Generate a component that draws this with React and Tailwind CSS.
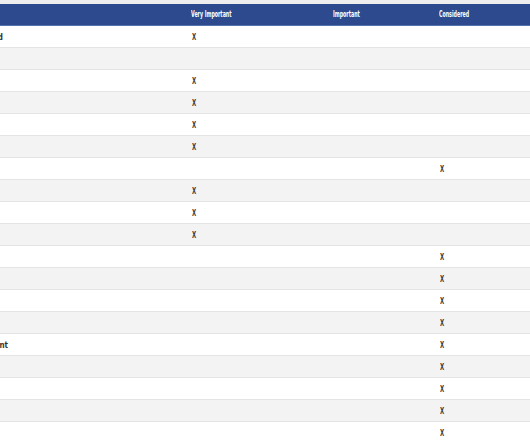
import React from 'react';

// Priority matrix table (cropped view)
const rows = [
  { label: 'Demonstrated', pr: 'pr-[183px]', mark: 1 },
  { label: '', mark: 0 },
  { label: '', mark: 1 },
  { label: '', mark: 1 },
  { label: '', mark: 1 },
  { label: '', mark: 1 },
  { label: '', mark: 3 },
  { label: '', mark: 1 },
  { label: '', mark: 1 },
  { label: '', mark: 1 },
  { label: '', mark: 3 },
  { label: '', mark: 3 },
  { label: '', mark: 3 },
  { label: '', mark: 3 },
  { label: 'Commitment to Client Engagement', pr: 'pr-[178px]', mark: 3 },
  { label: '', mark: 3 },
  { label: '', mark: 3 },
  { label: '', mark: 3 },
  { label: '', mark: 3 },
];

const font = { fontFamily: '"DejaVu Sans Condensed", "DejaVu Sans", sans-serif' };

const Cell = ({ show }) => (
  <div className="flex items-center pl-[6px] pt-[2px]">
    {show && (
      <span
        className="inline-block origin-left scale-x-[0.75] text-[8px] font-bold text-[#3a3a3a]"
        style={font}
      >
        X
      </span>
    )}
  </div>
);

const App = () => {
  return (
    <div className="w-[530px] h-[442px] overflow-hidden bg-white">
      <div className="h-[4px] bg-[#eeeeee]" />
      <div className="grid grid-cols-[186px_142px_106px_96px] h-[22px] bg-[#2c4a8d] border-b border-[#5573ad]">
        <div />
        {['Very Important', 'Important', 'Considered'].map((h) => (
          <div key={h} className="flex items-center pl-[5px]">
            <span
              className="inline-block origin-left scale-x-[0.62] whitespace-nowrap text-[8.5px] font-bold text-white"
              style={font}
            >
              {h}
            </span>
          </div>
        ))}
      </div>
      {rows.map((r, i) => (
        <div
          key={i}
          className={`grid grid-cols-[186px_142px_106px_96px] h-[22px] border-b border-[#e4e4e4] ${
            i % 2 === 0 ? 'bg-white' : 'bg-[#f3f3f3]'
          }`}
        >
          <div className="flex items-center justify-end overflow-hidden pt-[2px]">
            {r.label && (
              <span
                className={`whitespace-nowrap text-[8px] font-semibold text-[#333333] ${r.pr}`}
                style={font}
              >
                {r.label}
              </span>
            )}
          </div>
          <Cell show={r.mark === 1} />
          <Cell show={r.mark === 2} />
          <Cell show={r.mark === 3} />
        </div>
      ))}
    </div>
  );
};

export default App;
